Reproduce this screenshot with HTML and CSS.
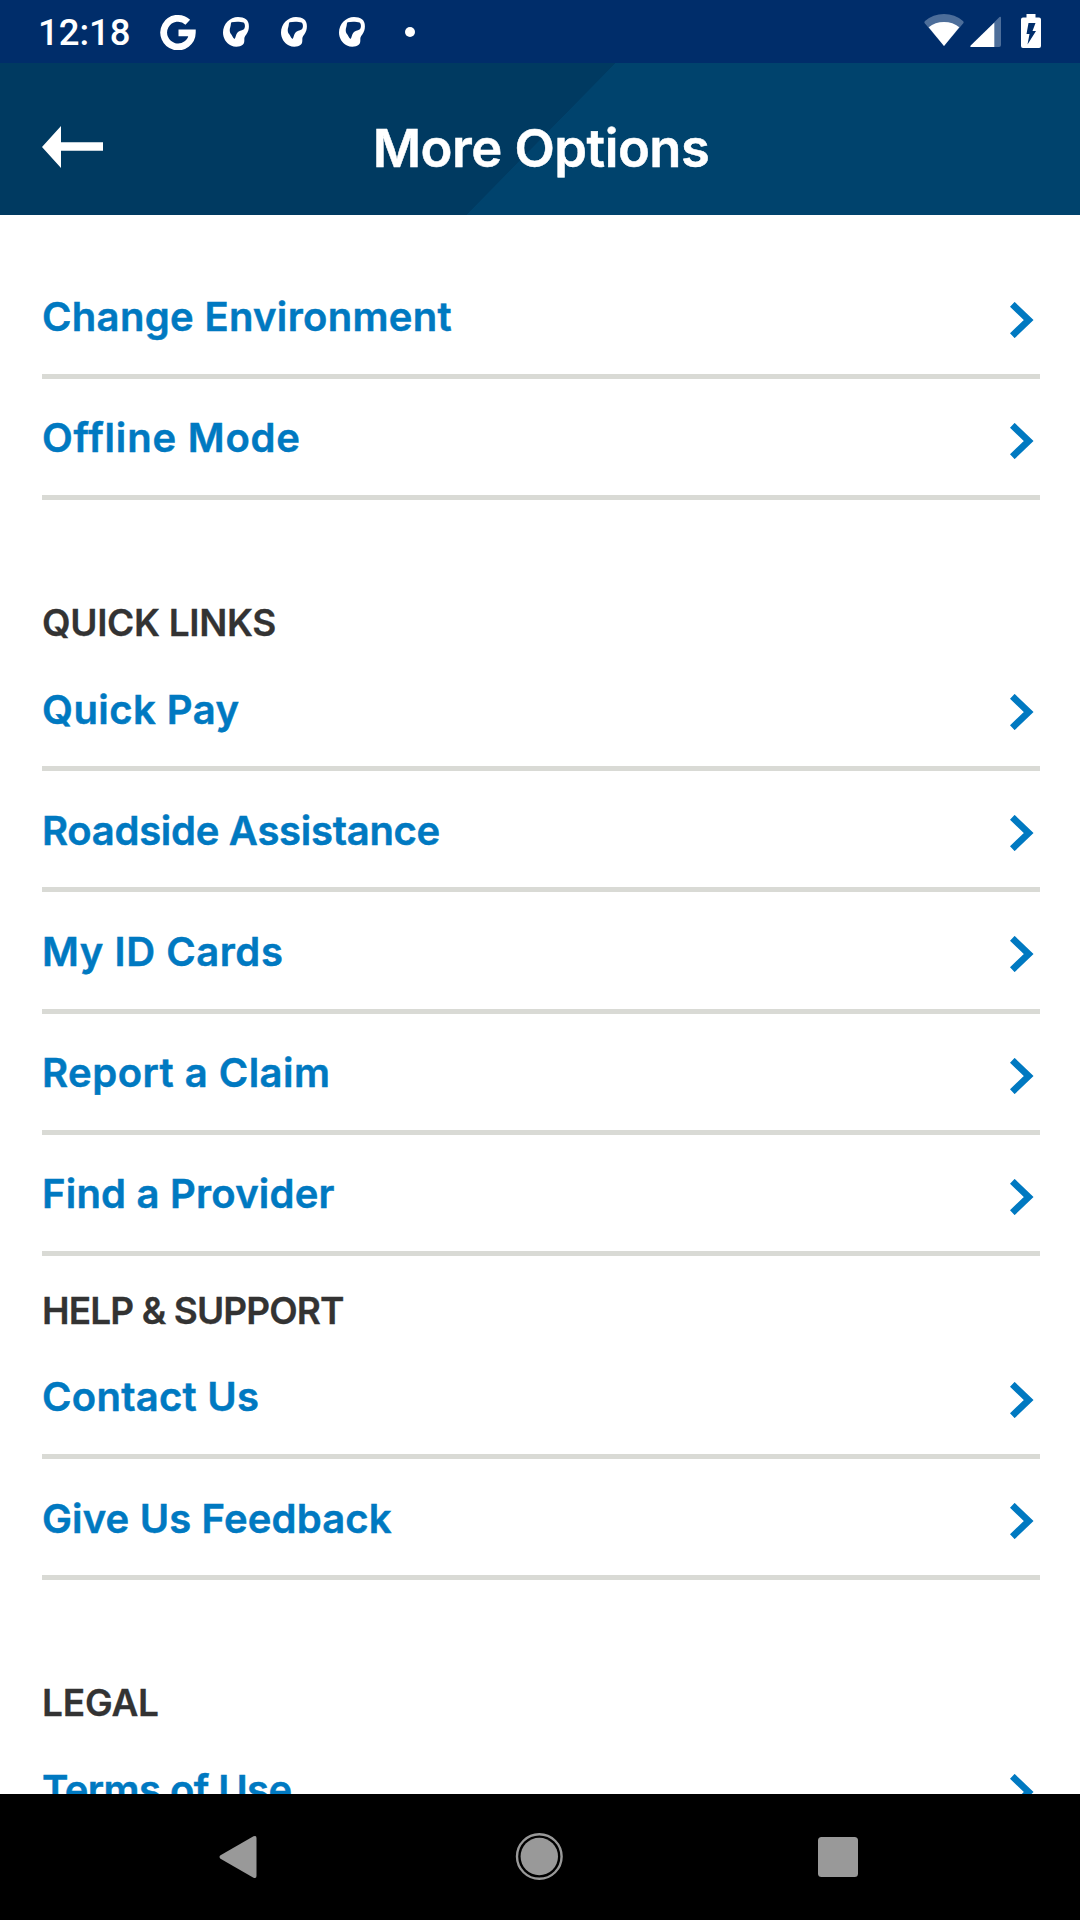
FILE: index.html
```html
<!DOCTYPE html>
<html lang="en">
<head>
<meta charset="utf-8">
<title>More Options</title>
<link rel="stylesheet" href="styles.css">
</head>
<body>
<svg class="defs" aria-hidden="true">
  <symbol id="chevron" viewBox="0 0 24 36"><path d="M2.300 2.300 18.700 18 2.300 33.700" fill="none" stroke="currentColor" stroke-width="6.700"/></symbol>
  <symbol id="head" viewBox="0 0 26 30"><path fill="currentColor" fill-rule="evenodd" d="M15 0C7 0 0 7 0 15.500C0 21 3 26 8 28.500C12 30.500 17 30 20 27.500C22 25.500 21 22.500 21.500 20.500C22 18.500 24.500 16.500 25.300 13.500C26.500 9 26 4.500 23 2.200C21 .7 18 0 15 0ZM8.500 5.200C12 4.500 18 4.500 20.500 5.600C22.500 7 22.300 11 20.500 12.600C18.500 13.800 16 14 14.300 15.700C12.800 17.500 13 20 11.500 22C9.500 20.500 9 18 8 17C6.500 15.500 6.500 12.500 7.200 10.500C8 8.500 7.500 6.500 8.500 5.200Z"/></symbol>
</svg>
<div class="screen">
  <div class="status">
    <span class="clock">12:18</span>
    <svg class="google" viewBox="0 0 36 36"><path d="M27.800 8.200A14.300 14.300 0 1 0 32.300 18.800H18.500" fill="none" stroke="currentColor" stroke-width="6.800"/></svg>
    <svg class="notice"><use href="#head"/></svg>
    <svg class="notice"><use href="#head"/></svg>
    <svg class="notice"><use href="#head"/></svg>
    <span class="dot"></span>
    <svg class="wifi" viewBox="0 0 40 32"><path d="M20 32 .5 9Q0 7.800 1 7Q9 0 20 0T39 7Q40 7.800 39.500 9Z" fill="#4d6e9a"/><path d="M20 32 4.700 13.300Q11 8 20 8T35.300 13.300Z" fill="#fff"/></svg>
    <svg class="signal" viewBox="0 0 31 31"><path d="M29 31Q31 31 31 29V2Q31 0 29.500 1L24 6.500V31Z" fill="#4d6e9a"/><path d="M24.300 31V6.500L.7 29.500Q-.3 31 1.500 31Z" fill="#fff"/></svg>
    <svg class="battery" viewBox="0 0 20 34"><path d="M5.500 0h9v3.500H18a2 2 0 0 1 2 2V32a2 2 0 0 1-2 2H2a2 2 0 0 1-2-2V5.500a2 2 0 0 1 2-2h3.500Z" fill="#fff"/><path d="M7.500 9h7l-3 8H15L6.500 30.500 8.500 20H5.500Z" fill="#002d6a"/></svg>
  </div>
  <header class="header">
    <svg class="back" viewBox="0 0 61 42"><path d="M0 21 19 0V16.300H61V24.800H19V42Z" fill="#fff"/></svg>
    <h1 class="title">More Options</h1>
  </header>
  <main class="content">
    <section class="group">
      <a class="row environment"><span>Change Environment</span><svg class="chevron"><use href="#chevron"/></svg></a>
      <a class="row offline"><span>Offline Mode</span><svg class="chevron"><use href="#chevron"/></svg></a>
    </section>
    <section class="group">
      <h2 class="heading spaced quick-links">QUICK LINKS</h2>
      <a class="row pay"><span>Quick Pay</span><svg class="chevron"><use href="#chevron"/></svg></a>
      <a class="row roadside"><span>Roadside Assistance</span><svg class="chevron"><use href="#chevron"/></svg></a>
      <a class="row cards"><span>My ID Cards</span><svg class="chevron"><use href="#chevron"/></svg></a>
      <a class="row claim"><span>Report a Claim</span><svg class="chevron"><use href="#chevron"/></svg></a>
      <a class="row provider"><span>Find a Provider</span><svg class="chevron"><use href="#chevron"/></svg></a>
    </section>
    <section class="group">
      <h2 class="heading help">HELP &amp; SUPPORT</h2>
      <a class="row contact"><span>Contact Us</span><svg class="chevron"><use href="#chevron"/></svg></a>
      <a class="row feedback"><span>Give Us Feedback</span><svg class="chevron"><use href="#chevron"/></svg></a>
    </section>
    <section class="group">
      <h2 class="heading spaced legal">LEGAL</h2>
      <a class="row terms"><span>Terms of Use</span><svg class="chevron"><use href="#chevron"/></svg></a>
    </section>
  </main>
  <nav class="navbar">
    <svg class="nav-icon" viewBox="0 0 48 48"><path d="M7.500 22.300 40.500 3.300Q43.500 2 43.500 5V43Q43.500 46 40.500 44.700L7.500 25.700Q5.500 24 7.500 22.300Z" fill="#999"/></svg>
    <svg class="nav-icon" viewBox="0 0 48 48"><circle cx="25.300" cy="23.500" r="22.300" fill="none" stroke="#999" stroke-width="2.400"/><circle cx="25.300" cy="23.500" r="18.700" fill="#999"/></svg>
    <svg class="nav-icon" viewBox="0 0 48 48"><rect x="4" y="4" width="40" height="40" rx="3.500" fill="#999"/></svg>
  </nav>
</div>
</body>
</html>
```
FILE: styles.css
```css
* { box-sizing: border-box; }
body { margin: 0; font-family: Inter, "Liberation Sans", sans-serif; font-weight: 600; }
svg { display: block; flex: none; }
.defs { width: 0; height: 0; position: absolute; }
.screen { display: flex; flex-direction: column; width: 1080px; height: 1920px; overflow: hidden; background: #fff; }

.status { display: flex; align-items: center; flex: none; height: 63px; padding: 0 39px 0 38px; background: #002d6a; color: #fff; }
.clock { width: 92px; margin-top: 2px; font: 500 36.500px/40px Roboto, sans-serif; }
.google { width: 36px; height: 36px; margin: 1px 27px 0 30px; }
.notice { width: 26px; height: 30px; margin: 1px 32px 0 0; }
.dot { width: 10px; height: 10px; margin-left: 8px; border-radius: 50%; background: #fff; }
.wifi { width: 40px; height: 32px; margin: -3px 0 0 auto; }
.signal { width: 31px; height: 31px; margin-left: 6px; }
.battery { width: 20px; height: 34px; margin: -1px 0 0 20px; }

.header { display: grid; grid-template-columns: 61px 1fr 61px; align-items: center; flex: none; height: 152px; padding: 15px 40px 0 42px; background: linear-gradient(to bottom right, #003a61 50%, #00436d 50.300%) 466px 0 / 149px 152px no-repeat, linear-gradient(to right, #003a61 540px, #00436d 540px); }
.back { width: 61px; height: 42px; }
.title { margin: 2px 0 0; color: #fff; font-size: 52.500px; font-weight: 600; line-height: 64px; letter-spacing: -.5px; text-align: center; -webkit-text-stroke: .5px; }

.content { flex: 1; min-height: 0; overflow: hidden; padding: 42.700px 40px 0 42px; }
.row { display: flex; align-items: center; justify-content: space-between; height: 121.200px; padding: 3px 6px 0 0; border-bottom: 5px solid #d9dad5; color: #0079c1; font-size: 40px; line-height: 48px; white-space: nowrap; -webkit-text-stroke: .5px; }
.chevron { width: 24px; height: 36px; margin-top: 5px; }
.heading { display: flex; align-items: flex-end; height: 82px; margin: 0; padding-bottom: 5px; color: #333; font-size: 37px; font-weight: 600; line-height: 44px; white-space: nowrap; -webkit-text-stroke: .3px; }
.spaced { height: 149.900px; }

.environment { letter-spacing: .32px; }
.offline { letter-spacing: .8px; }
.pay { letter-spacing: .46px; }
.roadside { letter-spacing: -.28px; }
.cards { letter-spacing: .56px; }
.claim { letter-spacing: .48px; }
.provider { letter-spacing: .22px; }
.contact { letter-spacing: .28px; }
.feedback { letter-spacing: .15px; }
.terms { letter-spacing: -.56px; }
.quick-links { letter-spacing: -.33px; }
.help { letter-spacing: -.88px; }
.legal { letter-spacing: -.2px; }

.navbar { display: flex; align-items: center; justify-content: space-between; flex: none; height: 126px; padding: 0 218px 0 213px; background: #000; }
.nav-icon { width: 48px; height: 48px; overflow: visible; }
```
